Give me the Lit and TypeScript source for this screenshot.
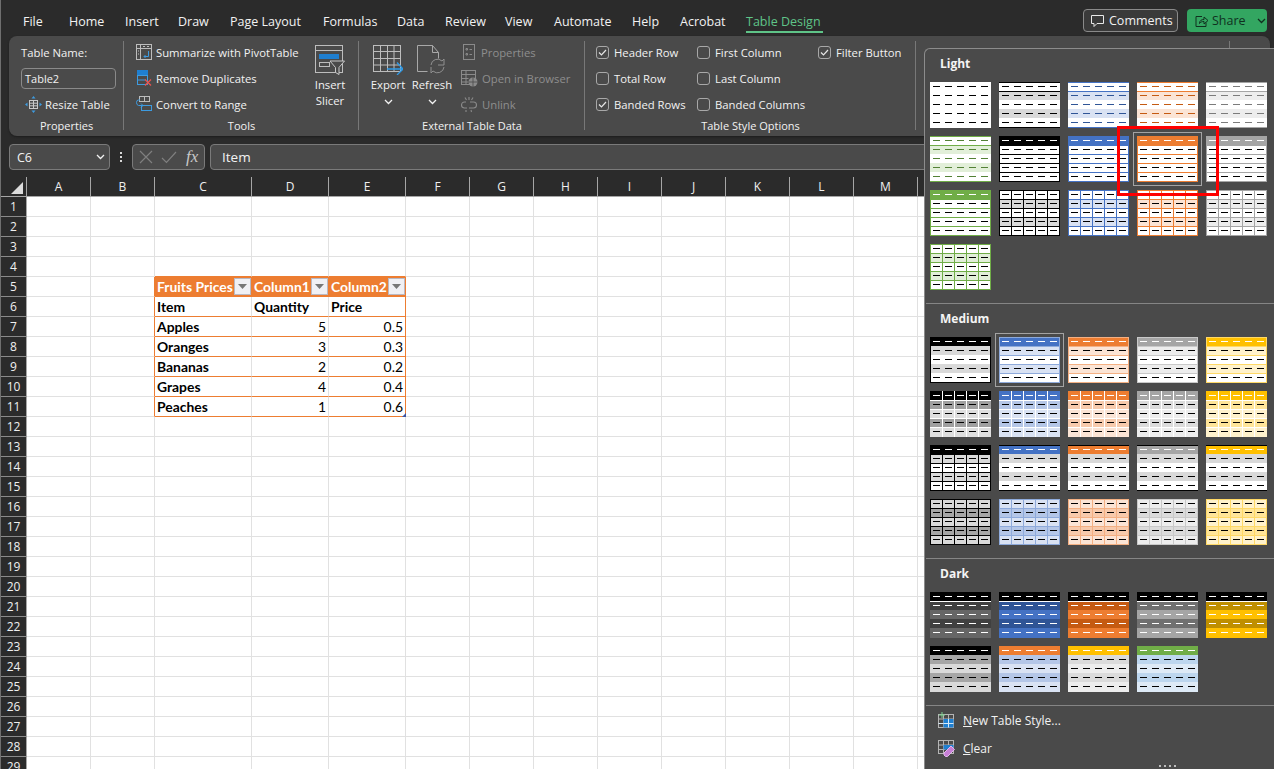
import { LitElement, css, html, svg } from "lit";
import { customElement } from "lit/decorators.js";

// ---- table style thumbnails ----
interface Thumb {
  rows: string[];
  dash: string[];
  h?: string; // lines between all rows
  v?: string; // lines between columns
  box?: string; // outer border
  tb?: string; // top and bottom border
  hh?: string; // line under the header only
}

const W = "#ffffff";
const K = "#000000";
const plain: Thumb = { rows: [W, W, W, W, W], dash: [K, K, K, K, K] };

function t(head: string, a: string, b: string, dh: string, db: string, opts: Partial<Thumb> = {}): Thumb {
  return { rows: [head, a, b, a, b], dash: [dh, db, db, db, db], ...opts };
}

const light: Thumb[] = [
  plain,
  t(W, "#d9d9d9", W, K, K, { tb: K, hh: K }),
  t(W, "#d9e2f3", W, "#2f5597", "#2f5597", { tb: "#4472c4", hh: "#4472c4" }),
  t(W, "#fbe4d5", W, "#c55a11", "#c55a11", { tb: "#ed7d31", hh: "#ed7d31" }),
  t(W, "#ededed", W, "#7b7b7b", "#7b7b7b", { tb: "#a5a5a5", hh: "#a5a5a5" }),

  t(W, "#e2efd9", W, "#538135", "#538135", { tb: "#70ad47", hh: "#70ad47" }),
  t(K, W, W, W, K, { box: K, h: K }),
  t("#4472c4", W, W, W, K, { box: "#4472c4", h: "#4472c4" }),
  t("#ed7d31", W, W, W, K, { box: "#ed7d31", h: "#ed7d31" }),
  t("#a5a5a5", W, W, W, K, { box: "#a5a5a5", h: "#a5a5a5" }),

  t("#70ad47", W, W, W, K, { box: "#70ad47", h: "#70ad47" }),
  t(W, "#d9d9d9", W, K, K, { box: K, h: K, v: K }),
  t(W, "#d9e2f3", W, K, K, { box: "#4472c4", h: "#4472c4", v: "#4472c4" }),
  t(W, "#fbe4d5", W, K, K, { box: "#ed7d31", h: "#ed7d31", v: "#ed7d31" }),
  t(W, "#ededed", W, K, K, { box: "#a5a5a5", h: "#a5a5a5", v: "#a5a5a5" }),

  t(W, "#e2efd9", W, K, K, { box: "#70ad47", h: "#70ad47", v: "#70ad47" }),
];

const tint = [
  { c: "#4472c4", line: "#8eaadb", a: "#b4c6e7", b: "#d9e2f3" },
  { c: "#ed7d31", line: "#f4b083", a: "#f7caac", b: "#fbe4d5" },
  { c: "#a5a5a5", line: "#c9c9c9", a: "#dbdbdb", b: "#ededed" },
  { c: "#ffc000", line: "#ffd966", a: "#ffe599", b: "#fff2cc" },
];

const medium: Thumb[] = [
  t(K, "#d9d9d9", W, W, K, { box: K }),
  ...tint.map((x) => t(x.c, x.b, W, W, K, { box: x.line, h: x.line })),

  t(K, "#a0a0a0", "#dedede", W, K, { h: W, v: W }),
  ...tint.map((x) => t(x.c, x.a, x.b, W, K, { h: W, v: W })),

  t(K, "#d9d9d9", W, W, K, { box: K, h: K, v: K }),
  ...tint.map((x) => t(x.c, "#d9d9d9", W, W, K, { tb: K })),

  { rows: ["#d9d9d9", "#a6a6a6", "#d9d9d9", "#a6a6a6", "#d9d9d9"], dash: [K, K, K, K, K], box: K, h: K, v: K },
  ...tint.map((x) => ({
    rows: [x.b, x.a, x.b, x.a, x.b],
    dash: [K, K, K, K, K],
    box: x.line,
    h: x.line,
    v: x.line,
  })),
];

const dark: Thumb[] = [
  t(K, "#404040", "#666666", W, W, { hh: W }),
  t(K, "#2f5496", "#4472c4", W, W, { hh: W }),
  t(K, "#c55a11", "#ed7d31", W, W, { hh: W }),
  t(K, "#707070", "#a5a5a5", W, W, { hh: W }),
  t(K, "#bf8f00", "#ffc000", W, W, { hh: W }),

  t(K, "#a6a6a6", "#d9d9d9", W, K),
  t("#ed7d31", "#b4c6e7", "#d9e2f3", W, K),
  t("#ffc000", "#dbdbdb", "#ededed", W, K),
  t("#70ad47", "#bdd6ee", "#deeaf6", W, K),
];

const ROW_Y = [0, 9, 18, 27, 36];
const DASH_Y = [4, 13, 22, 31, 40];
const COL_X = [3, 15, 27, 39, 51];

function thumb(s: Thumb) {
  return html`<svg class="thumb-svg" width="61" height="46" viewBox="0 0 61 46" shape-rendering="crispEdges">
    ${s.rows.map((c, i) => svg`<rect x="0" y=${ROW_Y[i]} width="61" height=${i === 4 ? 10 : 9} fill=${c} />`)}
    ${s.h ? ROW_Y.slice(1).map((y) => svg`<rect x="0" y=${y} width="61" height="1" fill=${s.h} />`) : ""}
    ${s.hh ? svg`<rect x="0" y="9" width="61" height="1" fill=${s.hh} />` : ""}
    ${s.v ? [12, 24, 36, 48].map((x) => svg`<rect x=${x} y="0" width="1" height="46" fill=${s.v} />`) : ""}
    ${s.tb
      ? svg`<rect x="0" y="0" width="61" height="1" fill=${s.tb} /><rect x="0" y="45" width="61" height="1" fill=${s.tb} />`
      : ""}
    ${s.box ? svg`<rect x="0.5" y="0.5" width="60" height="45" fill="none" stroke=${s.box} />` : ""}
    ${DASH_Y.map((y, r) => COL_X.map((x) => svg`<rect x=${x} y=${y} width="7" height="1" fill=${s.dash[r]} />`))}
  </svg>`;
}

// ---- ribbon icons ----
const icons = {
  pivot: svg`<rect x=".5" y=".5" width="15" height="15" fill="none" stroke="#bdbdbd"/><path d="M.5 4.500h15M4.500 .5v15" stroke="#bdbdbd" fill="none"/><path d="M2 7h1M2 10h1M7 2.500h2M11 2.500h2" stroke="#bdbdbd"/><path d="M12.500 7v5.500H8M9.500 11 8 12.500 9.500 14" stroke="#3d9be0" fill="none"/>`,
  dup: svg`<rect x="1" y="0" width="11" height="5" fill="#1f7fd0"/><rect x="1.500" y="5.500" width="10" height="9" fill="none" stroke="#3d9be0"/><path d="M1.500 10h8" stroke="#3d9be0"/><path d="M9 9.500l6 6M15 9.500l-6 6" stroke="#e8544f" stroke-width="1.300"/>`,
  convert: svg`<rect x="3.500" y=".5" width="10" height="5" fill="none" stroke="#bdbdbd"/><path d="M8.500 .5v5" stroke="#bdbdbd"/><rect x="5.500" y="9.500" width="10" height="5" fill="none" stroke="#3d9be0"/><path d="M4 4H2.500Q.5 4 .5 6.500T2.500 9.500H7M5 7.500 7 9.500 5 11.500" fill="none" stroke="#3d9be0"/>`,
  resize: svg`<rect x="4.500" y="4.500" width="8" height="8" fill="none" stroke="#c8c8c8"/><path d="M4.500 7.200h8M4.500 9.800h8M8.500 4.500v8" stroke="#c8c8c8"/><path d="M8.500 0 6.500 2.500h4zM8.500 17 6.500 14.500h4zM0 8.500 2.500 6.500v4zM17 8.500 14.500 6.500v4z" fill="#3d9be0"/>`,
  slicer: svg`<rect x=".5" y=".5" width="27" height="27" fill="none" stroke="#bdbdbd"/><path d="M.5 5.500h27" stroke="#bdbdbd"/><rect x="4" y="9" width="20" height="5" fill="#1f7fd0"/><rect x="4.500" y="17.500" width="10" height="4" fill="none" stroke="#bdbdbd"/><path d="M15 16h14.500l-5.500 6.500v7l-3.500-2v-5z" fill="#4a4a4a" stroke="#c8c8c8"/>`,
  exportIcon: svg`<rect x=".5" y=".5" width="27" height="26" fill="none" stroke="#bdbdbd"/><path d="M.5 6.500h27M.5 13.500h27M.5 20h27M7.500 .5v26M14.500 .5v26M21 .5v26" stroke="#bdbdbd" fill="none"/><path d="M14 24h15M24 17.500l6 6.500-6 6" fill="none" stroke="#2f9ae6" stroke-width="1.300"/>`,
  refresh: svg`<path d="M.5 .5h15l6 7v6M.5 .5v26h10M15.500 .5v7h6" fill="none" stroke="#a8a8a8"/><path d="M14 20a6.500 6.500 0 0 1 11-4l2-2v6h-6M27 22a6.500 6.500 0 0 1-11 4l-2 2v-6" fill="none" stroke="#8f8f8f"/>`,
  props: svg`<rect x="2.500" y=".5" width="11" height="15" fill="none" stroke="#8a8a8a"/><path d="M5 4.500h1.500v1.500H5zM5 9.500h1.500v1.500H5z" fill="none" stroke="#8a8a8a"/><path d="M8.500 5.500H11M8.500 10.500H11" stroke="#8a8a8a"/>`,
  browser: svg`<rect x=".5" y=".5" width="14" height="14" fill="none" stroke="#8a8a8a"/><path d="M.5 4.500h14M.5 8.500h7M.5 12h7M5 .5v14" stroke="#8a8a8a" fill="none"/><circle cx="12" cy="12" r="4.500" fill="#8a8a8a"/><path d="M7.500 12h9M12 7.500v9" stroke="#4a4a4a" stroke-width=".8"/>`,
  unlink: svg`<path d="M5 6H3.500a3 3 0 0 0 0 6H6M9 6h3.500a3 3 0 0 1 0 6H8M8 1v3M4 1.500 5.500 4M12 1.500 10.500 4M5 14v2M10 14l.5 2" fill="none" stroke="#8a8a8a" stroke-width="1.100"/>`,
  comment: svg`<path d="M.5 .5h12v8H6L3 11.500V8.500H.5z" fill="none" stroke="#e8e8e8"/>`,
  share: svg`<path d="M7 2.500H1v10h10V8.500" fill="none" stroke="#10301f"/><path d="M4.500 9.500c0-3 2-4 4.500-4V3l4 3.500L9 10V7.500c-2 0-3.500.5-4.500 2z" fill="none" stroke="#10301f"/>`,
  newStyle: svg`<rect x=".5" y="2.500" width="15" height="13" fill="none" stroke="#b5b5b5"/><path d="M.5 7h15M.5 11.500h15M5.500 2.500v13M10.500 2.500v13" stroke="#b5b5b5"/><rect x="5.500" y="7" width="10" height="8.500" fill="#1f7fd0"/><path d="M.5 11.500h5M10.500 7v8.500M5.500 11.500h10" stroke="#d6e9f8"/><path d="M4 0v6M1 3h6" stroke="#7fd08f"/>`,
  clear: svg`<rect x=".5" y="1.500" width="15" height="13" fill="none" stroke="#b5b5b5"/><path d="M.5 6h15M.5 10.500h7M5.500 1.500v13M10.500 1.500v8" stroke="#b5b5b5"/><rect x="5.500" y="6" width="10" height="4.500" fill="#1f7fd0"/><path d="M6 14 13 7l3.500 3.500-7 7H7.500L6 16z" fill="#c77fd6" stroke="#e3b8ec"/>`,
};

function ic(body: unknown, w = 16, h = 16) {
  return html`<svg class="icon" width=${w} height=${h} viewBox="0 0 ${w} ${h}">${body}</svg>`;
}

const chevron = html`<svg class="chev" width="9" height="6" viewBox="0 0 9 6"><path d="M1 1l3.500 3.500L8 1" fill="none" stroke="currentColor" stroke-width="1.300"/></svg>`;
const tick = html`<svg width="13" height="13" viewBox="0 0 13 13"><path d="M3 6.500l2.500 2.500L10 4" fill="none" stroke="#e6e6e6" stroke-width="1.200"/></svg>`;

// ---- sheet ----
const COLUMNS = "ABCDEFGHIJKLMNOPQRS".split("");
const RIBBON_TABS = ["File", "Home", "Insert", "Draw", "Page Layout", "Formulas", "Data", "Review", "View", "Automate", "Help", "Acrobat"];

const TABLE: Record<number, (string | number)[]> = {
  5: ["Fruits Prices", "Column1", "Column2"],
  6: ["Item", "Quantity", "Price"],
  7: ["Apples", 5, 0.5],
  8: ["Oranges", 3, 0.3],
  9: ["Bananas", 2, 0.2],
  10: ["Grapes", 4, 0.4],
  11: ["Peaches", 1, 0.6],
};

const OPTIONS = [
  ["Header Row", true],
  ["First Column", false],
  ["Filter Button", true],
  ["Total Row", false],
  ["Last Column", false],
  null,
  ["Banded Rows", true],
  ["Banded Columns", false],
  null,
] as ([string, boolean] | null)[];

@customElement("app-root")
export class AppRoot extends LitElement {
  private cell(row: number, col: number) {
    const inTable = col >= 2 && col <= 4;
    const inRows = row >= 5 && row <= 11;
    const cls = ["cell"];
    if (inRows && (col === 1 || col === 4)) cls.push("edge-r");
    if (row >= 4 && row <= 11 && inTable) cls.push("edge-b");
    if (!inRows || !inTable) return html`<div class=${cls.join(" ")}></div>`;

    const value = TABLE[row][col - 2];
    if (row === 5) {
      return html`<div class="cell head edge-b">
        <span>${value}</span>
        <span class="filter"><svg width="9" height="5" viewBox="0 0 9 5"><path d="M0 0h9L4.500 5z" fill="#777777"/></svg></span>
      </div>`;
    }
    if (typeof value === "number") cls.push("num");
    else cls.push("bold");
    return html`<div class=${cls.join(" ")}>
      ${value}${row === 11 && col === 4 ? html`<span class="handle"></span>` : ""}
    </div>`;
  }

  private thumbs(list: Thumb[], selected: number[]) {
    return html`<div class="thumbs">
      ${list.map((s, i) => html`<div class="thumb ${selected.includes(i) ? "sel" : ""}">${thumb(s)}</div>`)}
    </div>`;
  }

  render() {
    const rows = Array.from({ length: 29 }, (_, i) => i + 1);
    return html`
      <div class="titlebar">
        <div class="tabs">
          ${RIBBON_TABS.map((tab) => html`<span class="tab">${tab}</span>`)}
          <span class="tab active"><span>Table Design</span></span>
        </div>
        <div class="actions">
          <button class="comments">${ic(icons.comment, 13, 12)}Comments</button>
          <button class="share">${ic(icons.share, 14, 14)}<span>Share</span>${chevron}</button>
        </div>
      </div>

      <div class="ribbon">
        <section class="group g1">
          <div class="body stack">
            <div class="item"><span class="txt">Table Name:</span></div>
            <div class="item"><div class="name-input">Table2</div></div>
            <div class="item resize">${ic(icons.resize, 17, 17)}<span class="txt">Resize Table</span></div>
          </div>
          <div class="label">Properties</div>
        </section>

        <section class="group g2">
          <div class="body">
            <div class="stack list">
              <div class="item">${ic(icons.pivot)}<span class="txt">Summarize with PivotTable</span></div>
              <div class="item">${ic(icons.dup)}<span class="txt">Remove Duplicates</span></div>
              <div class="item">${ic(icons.convert)}<span class="txt">Convert to Range</span></div>
            </div>
            <div class="big slicer">
              ${ic(icons.slicer, 30, 30)}
              <span>Insert</span>
              <span>Slicer</span>
            </div>
          </div>
          <div class="label">Tools</div>
        </section>

        <section class="group g3">
          <div class="body">
            <div class="big">${ic(icons.exportIcon, 30, 30)}<span>Export</span>${chevron}</div>
            <div class="big">${ic(icons.refresh, 30, 30)}<span>Refresh</span>${chevron}</div>
            <div class="stack list off">
              <div class="item">${ic(icons.props)}<span class="txt">Properties</span></div>
              <div class="item">${ic(icons.browser, 17, 17)}<span class="txt">Open in Browser</span></div>
              <div class="item">${ic(icons.unlink, 17, 17)}<span class="txt">Unlink</span></div>
            </div>
          </div>
          <div class="label">External Table Data</div>
        </section>

        <section class="group g4">
          <div class="body options">
            ${OPTIONS.map((o) =>
              o
                ? html`<div class="item"><span class="check">${o[1] ? tick : ""}</span><span class="txt">${o[0]}</span></div>`
                : html`<div></div>`
            )}
          </div>
          <div class="label">Table Style Options</div>
        </section>

        <section class="group g5"></section>
      </div>

      <div class="formula">
        <div class="namebox"><span>C6</span>${chevron}</div>
        <div class="grip"><i></i><i></i><i></i></div>
        <div class="fxbox">
          <svg width="14" height="14" viewBox="0 0 14 14"><path d="M1 1l12 12M13 1L1 13" stroke="#7f7f7f" stroke-width="1.200"/></svg>
          <svg width="16" height="14" viewBox="0 0 16 14"><path d="M1 8l4.500 4.500L15 2" fill="none" stroke="#7f7f7f" stroke-width="1.200"/></svg>
          <span class="fx">fx</span>
        </div>
        <div class="input">Item</div>
      </div>

      <div class="sheet">
        <div class="corner"><svg width="12" height="12" viewBox="0 0 12 12"><path d="M12 0v12H0z" fill="#dcdcdc"/></svg></div>
        ${COLUMNS.map((c) => html`<div class="colhead">${c}</div>`)}
        ${rows.map(
          (r) => html`<div class="rowhead">${r}</div>
            ${COLUMNS.map((_, c) => this.cell(r, c))}`
        )}
      </div>

      <aside class="gallery">
        <h4>Light</h4>
        ${this.thumbs(light, [8])}
        <hr />
        <h4>Medium</h4>
        ${this.thumbs(medium, [1])}
        <hr />
        <h4>Dark</h4>
        ${this.thumbs(dark, [])}
        <hr />
        <div class="menu-item">${ic(icons.newStyle, 17, 16)}<span><u>N</u>ew Table Style...</span></div>
        <div class="menu-item">${ic(icons.clear, 17, 18)}<span><u>C</u>lear</span></div>
        <div class="dots"><i></i><i></i><i></i><i></i></div>
      </aside>

      <div class="callout"></div>
    `;
  }

  static styles = css`
    :host {
      display: block;
      position: relative;
      height: 769px;
      overflow: hidden;
      box-sizing: border-box;
      border-left: 1px solid #6f6f6f;
      background: #2b2b2b;
      color: #f2f2f2;
      font-family: "Open Sans", "Noto Sans", sans-serif;
      font-size: 11.3px;
    }

    .titlebar {
      display: flex;
      height: 36px;
      padding-left: 22px;
      padding-right: 7px;
      box-sizing: border-box;
    }

    .tabs {
      display: grid;
      grid-template-columns: 46px 56px 53px 52px 93px 74px 48px 60px 49px 78px 48px 66px auto;
      align-items: center;
      padding-top: 6px;
      font-size: 12.5px;
      white-space: nowrap;
    }

    .tab.active span {
      display: inline-block;
      color: #5fc488;
      line-height: 19px;
      border-bottom: 2px solid #5fc488;
      margin-top: 2px;
      padding-right: 2px;
    }

    .actions {
      margin-left: auto;
      display: flex;
      gap: 9px;
      padding-top: 9px;
    }

    button {
      height: 23px;
      box-sizing: border-box;
      font: inherit;
      font-size: 12.5px;
      border-radius: 4px;
      display: flex;
      align-items: center;
      padding: 0;
    }

    .comments {
      width: 95px;
      color: #f2f2f2;
      background: #3a3a3a;
      border: 1px solid #8a8a8a;
      padding-left: 7px;
      gap: 5px;
    }

    .share {
      width: 80px;
      color: #10301f;
      background: #33a661;
      border: none;
      padding-left: 8px;
      gap: 3px;
    }

    .share .chev {
      margin-left: 8px;
    }

    .ribbon {
      display: flex;
      height: 100px;
      margin: 0 4px 0 8px;
      box-sizing: border-box;
      padding-top: 4px;
      background: #4a4a4a;
      border-radius: 8px;
      box-shadow: 0 1px 2px #1d1d1d;
    }

    .group {
      position: relative;
      display: flex;
      flex-direction: column;
      height: 94px;
      box-sizing: border-box;
    }

    .group::after {
      content: "";
      position: absolute;
      right: 0;
      top: 1px;
      bottom: 4px;
      width: 1px;
      background: #787878;
    }

    .g1 {
      width: 115px;
    }
    .g2 {
      width: 235px;
    }
    .g3 {
      width: 226px;
    }
    .g4 {
      width: 331px;
    }
    .g5 {
      width: 314px;
    }

    .body {
      display: flex;
      height: 78px;
    }

    .stack {
      flex-direction: column;
      display: flex;
    }

    .g1 .stack {
      padding-left: 12px;
    }

    .item {
      height: 26px;
      box-sizing: border-box;
      padding-bottom: 2px;
      display: flex;
      align-items: center;
      gap: 4px;
      white-space: nowrap;
    }

    .resize {
      padding-left: 4px;
      gap: 3px;
    }

    .name-input {
      width: 95px;
      height: 21px;
      box-sizing: border-box;
      border: 1px solid #8a8a8a;
      border-radius: 4px;
      line-height: 19px;
      padding-left: 3px;
      font-size: 11px;
    }

    .label {
      height: 16px;
      line-height: 16px;
      text-align: center;
      font-size: 11px;
      white-space: nowrap;
    }

    .list {
      padding-left: 12px;
      width: 180px;
      box-sizing: border-box;
      flex: none;
    }

    .off {
      color: #8e8e8e;
      padding-left: 7px;
      width: auto;
    }

    .big {
      width: 44px;
      flex: none;
      display: flex;
      flex-direction: column;
      align-items: center;
      padding-top: 5px;
      line-height: 16px;
      box-sizing: border-box;
    }

    .big .icon {
      margin-bottom: 2px;
    }

    .big .chev {
      margin-top: 6px;
    }

    .g3 .body {
      padding-left: 7px;
    }

    .slicer {
      margin-left: 4px;
    }

    .options {
      display: grid;
      grid-template-columns: 101px 121px auto;
      grid-auto-rows: 26px;
      padding-left: 11px;
    }

    .options .item {
      gap: 5px;
    }

    .check {
      width: 13px;
      height: 13px;
      box-sizing: border-box;
      border: 1px solid #a8a8a8;
      border-radius: 3px;
      display: flex;
      align-items: center;
      justify-content: center;
    }

    .check svg {
      flex: none;
      margin: -1px;
    }

    .formula {
      display: flex;
      height: 26px;
      margin: 8px 4px 0 8px;
    }

    .namebox,
    .fxbox,
    .input {
      box-sizing: border-box;
      height: 26px;
      background: #4a4a4a;
      border: 1px solid #7a7a7a;
      border-radius: 4px;
      display: flex;
      align-items: center;
    }

    .namebox {
      width: 101px;
      padding: 0 4px 0 7px;
      justify-content: space-between;
      font-size: 12.5px;
    }

    .grip {
      width: 22px;
      display: flex;
      flex-direction: column;
      align-items: center;
      justify-content: center;
      gap: 2px;
    }

    .grip i {
      width: 2px;
      height: 2px;
      background: #d8d8d8;
    }

    .fxbox {
      width: 73px;
      gap: 8px;
      padding-left: 6px;
    }

    .fx {
      font: italic 17px "Liberation Serif", serif;
      color: #c8c8c8;
      margin-left: 1px;
    }

    .input {
      flex: 1;
      margin-left: 5px;
      padding-left: 11px;
      font-size: 13.5px;
    }

    .sheet {
      display: grid;
      grid-template-columns: 26px 64px 64px 97px 77px 77px repeat(14, 64px);
      grid-auto-rows: 20px;
      margin-top: 7px;
      width: 1400px;
      background: #fff;
    }

    .corner,
    .colhead,
    .rowhead {
      background: #2b2b2b;
      box-sizing: border-box;
      border-right: 1px solid #a6a6a6;
      border-bottom: 1px solid #a6a6a6;
      color: #f0f0f0;
      display: flex;
      align-items: center;
      justify-content: center;
      font-size: 12px;
    }

    .rowhead {
      border-bottom-color: #8a8a8a;
    }

    .corner {
      padding: 2px 0 0 7px;
    }

    .cell {
      position: relative;
      box-sizing: border-box;
      border-right: 1px solid #e1e1e1;
      border-bottom: 1px solid #e1e1e1;
      color: #000;
      font: 13.9px/20px Lato, sans-serif;
      padding: 0 2px;
      white-space: nowrap;
    }

    .cell.edge-r {
      border-right-color: #ed7d31;
    }

    .cell.edge-b {
      border-bottom-color: #ed7d31;
    }

    .cell.bold {
      font-weight: 700;
    }

    .cell.num {
      text-align: right;
    }

    .cell.head {
      background: #ed7d31;
      border-right-color: #ed7d31;
      color: #fff;
      font-weight: 700;
    }

    .filter {
      position: absolute;
      right: 0;
      top: 1px;
      width: 17px;
      height: 17px;
      box-sizing: border-box;
      background: #f0f0f4;
      border: 1px solid #b9b9c4;
      display: flex;
      align-items: center;
      justify-content: center;
    }

    .handle {
      position: absolute;
      z-index: 1;
      right: -1px;
      bottom: -1px;
      width: 0;
      height: 0;
      border-left: 4px solid transparent;
      border-bottom: 4px solid #3a53a4;
    }

    .gallery {
      position: absolute;
      left: 923px;
      top: 48px;
      width: 351px;
      height: 721px;
      box-sizing: border-box;
      background: #4a4a4a;
      border-left: 1px solid #8c8c8c;
      border-top: 1px solid #8c8c8c;
      border-top-left-radius: 6px;
    }

    h4 {
      margin: 0;
      height: 33px;
      line-height: 30px;
      padding-left: 15px;
      font-size: 12px;
      font-weight: 700;
      color: #f4f4f4;
    }

    .thumbs {
      display: grid;
      grid-template-columns: repeat(5, 61px);
      grid-auto-rows: 46px;
      gap: 8px;
      padding: 0 0 13px 5px;
    }

    .thumb {
      width: 61px;
      height: 46px;
    }

    .thumb-svg {
      display: block;
    }

    .thumb.sel {
      outline: 1px solid #a3a3a3;
      outline-offset: 3px;
    }

    hr {
      margin: 0 0 0 1px;
      border: none;
      height: 1px;
      background: #858585;
    }

    .menu-item {
      height: 28px;
      display: flex;
      align-items: center;
      gap: 8px;
      padding-left: 13px;
      font-size: 12px;
    }

    .dots {
      display: flex;
      gap: 3px;
      justify-content: center;
      margin: 3px 0 0 232px;
      width: 20px;
    }

    .dots i {
      width: 2px;
      height: 2px;
      background: #bdbdbd;
    }

    .callout {
      position: absolute;
      left: 1116px;
      top: 126px;
      width: 102px;
      height: 70px;
      box-sizing: border-box;
      border: 3px solid #ff0000;
    }
  `;
}
